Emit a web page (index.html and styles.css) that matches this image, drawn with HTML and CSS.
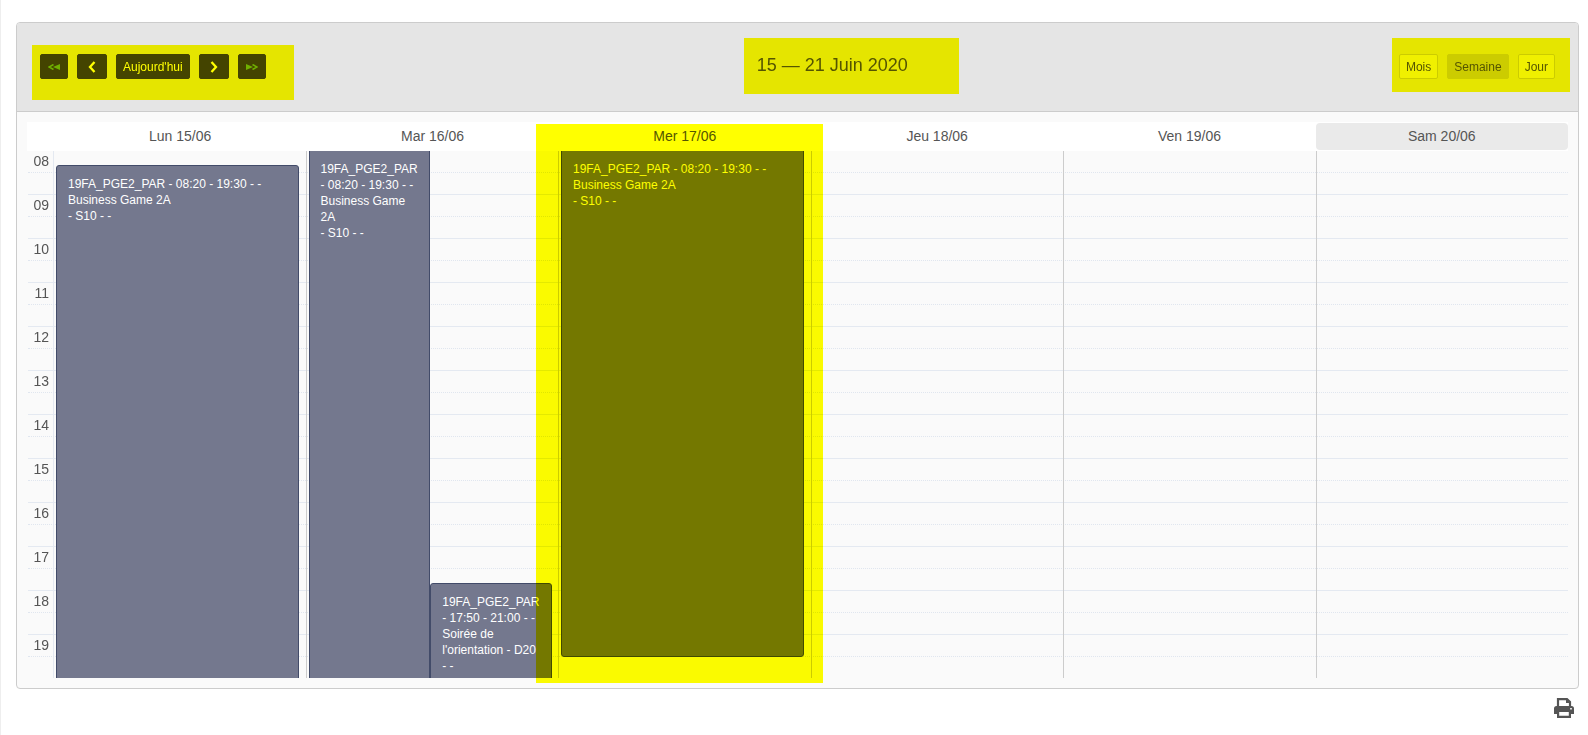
FILE: index.html
```html
<!DOCTYPE html>
<html lang="fr">
<head>
  <meta charset="UTF-8" />
  <meta name="viewport" content="width=device-width, initial-scale=1.0"/>
  <title>Planning</title>
  <link rel="stylesheet" href="styles.css">
</head>
<body>

<main class="planning">
  <header class="toolbar">
    <div class="group nav marked">
      <button type="button" class="btn dark far" aria-label="Année précédente"><svg width="12" height="6" viewBox="0 0 12 6"><path d="M5.500 0.500L1 3l4.500 2.500" fill="none" stroke="currentColor" stroke-width="1.600"/><path d="M12 0v6L5 3z" fill="currentColor"/></svg></button>
      <button type="button" class="btn dark step" aria-label="Semaine précédente"><svg width="8" height="12" viewBox="0 0 8 12"><path d="M6.500 1L2 6l4.500 5" fill="none" stroke="currentColor" stroke-width="2.300"/></svg></button>
      <button type="button" class="btn dark">Aujourd'hui</button>
      <button type="button" class="btn dark step" aria-label="Semaine suivante"><svg width="8" height="12" viewBox="0 0 8 12"><path d="M1.500 1L6 6l-4.500 5" fill="none" stroke="currentColor" stroke-width="2.300"/></svg></button>
      <button type="button" class="btn dark far" aria-label="Année suivante"><svg width="12" height="6" viewBox="0 0 12 6"><path d="M6.500 0.500L11 3 6.500 5.500" fill="none" stroke="currentColor" stroke-width="1.600"/><path d="M0 0v6L7 3z" fill="currentColor"/></svg></button>
    </div>
    <h2 class="title marked">15 — 21 Juin 2020</h2>
    <div class="group views marked">
      <button type="button" class="btn">Mois</button>
      <button type="button" class="btn active">Semaine</button>
      <button type="button" class="btn">Jour</button>
    </div>
  </header>

  <div class="week">
    <div class="days">
      <div class="day">Lun 15/06</div>
      <div class="day">Mar 16/06</div>
      <div class="day">Mer 17/06</div>
      <div class="day">Jeu 18/06</div>
      <div class="day">Ven 19/06</div>
      <div class="day today">Sam 20/06</div>
    </div>

    <div class="scroller">
      <div class="hours">
        <div class="hour">08</div>
        <div class="hour">09</div>
        <div class="hour">10</div>
        <div class="hour">11</div>
        <div class="hour">12</div>
        <div class="hour">13</div>
        <div class="hour">14</div>
        <div class="hour">15</div>
        <div class="hour">16</div>
        <div class="hour">17</div>
        <div class="hour">18</div>
        <div class="hour">19</div>
      </div>
      <div class="columns">
        <div class="column">
          <div class="event from-0820">19FA_PGE2_PAR - 08:20 - 19:30 - -<br>Business Game 2A<br>- S10 - -</div>
        </div>
        <div class="column">
          <div class="event from-top half">19FA_PGE2_PAR - 08:20 - 19:30 - -<br>Business Game 2A<br>- S10 - -</div>
          <div class="event from-1750 half second">19FA_PGE2_PAR - 17:50 - 21:00 - -<br>Soirée de l'orientation - D20 - -</div>
        </div>
        <div class="column">
          <div class="event from-top to-1930">19FA_PGE2_PAR - 08:20 - 19:30 - -<br>Business Game 2A<br>- S10 - -</div>
        </div>
        <div class="column"></div>
        <div class="column"></div>
        <div class="column"></div>
      </div>
    </div>
    <div class="day-mark"></div>
  </div>
</main>

<div class="actions">
  <button type="button" class="print" aria-label="Imprimer">
    <svg width="20" height="20" viewBox="0 0 20 20">
      <path d="M4 9V1.200h9L16 4v5" fill="none" stroke="currentColor" stroke-width="2.200"/>
      <path d="M12 1v4h4.500z" fill="currentColor"/>
      <path fill-rule="evenodd" d="M2.500 8h15A2.500 2.500 0 0 1 20 10.500V16h-3v4H3v-4H0v-5.500A2.500 2.500 0 0 1 2.500 8zM5.200 14v3.700h9.600V14zM16.200 10v1.500h1.600V10z" fill="currentColor"/>
    </svg>
  </button>
</div>

</body>
</html>
```

FILE: styles.css
```css
* {
  box-sizing: border-box;
}
body {
  font-family: Arial, "Liberation Sans", sans-serif;
  font-size: 14px;
  margin: 0;
  min-height: 100vh;
  padding: 22px 9px 0 15px;
  background: #fff;
  color: #555;
  border-left: 1px solid #eee;
}
.planning {
  border: 1px solid #ccc;
  border-radius: 4px;
  background: #fafafa;
}

/* toolbar */
.toolbar {
  display: flex;
  justify-content: space-between;
  align-items: flex-start;
  height: 89px;
  padding: 31px 23px 0;
  background: #e5e5e5;
  border-bottom: 1px solid #ccc;
  border-radius: 3px 3px 0 0;
}
.group {
  display: flex;
  gap: 9px;
}
.btn {
  display: flex;
  align-items: center;
  justify-content: center;
  height: 25px;
  padding: 0 6px;
  font-family: inherit;
  font-size: 12px;
  color: #555;
  background: #f0f0f0;
  border: 1px solid #ccc;
  border-radius: 2px;
  cursor: pointer;
}
.btn.active {
  background: #ccc;
}
.btn.dark {
  color: #fff;
  background: #444;
  border-color: #444;
}
.btn.far {
  width: 28px;
  color: #70b000;
}
.btn.step {
  width: 30px;
}
.title {
  margin: 0;
  font-size: 18px;
  font-weight: normal;
  line-height: 22px;
}

/* highlighter strokes */
.marked {
  position: relative;
}
.marked::after,
.day-mark {
  content: "";
  position: absolute;
  background: #ff0;
  mix-blend-mode: multiply;
  pointer-events: none;
}
.nav::after {
  inset: -9px -28px -21px -8px;
}
.title::after {
  inset: -16px -51px -18px -13px;
}
.views::after {
  inset: -16px -15px -13px -7px;
}
.day-mark {
  top: 12px;
  bottom: 5px;
  left: calc(37px + (100% - 47px) / 3 - 23px);
  width: calc((100% - 47px) / 6 + 35px);
}

/* week grid */
.week {
  position: relative;
  padding: 10px;
}
.days {
  display: flex;
  height: 29px;
  padding: 1px 0 1px 27px;
  background: #fff;
}
.day {
  flex: 1;
  line-height: 27px;
  text-align: center;
}
.day.today {
  background: #eaeaea;
  border-radius: 4px;
}
.scroller {
  display: flex;
  height: 527px;
  overflow: hidden;
  margin-left: 1px;
  background: repeating-linear-gradient(transparent 0 43px, #e4e9f1 43px 44px);
}
.hours {
  width: 26px;
  border-right: 1px solid #e4e9f1;
}
.hour {
  height: 44px;
  padding-right: 4px;
  line-height: 21px;
  text-align: right;
}
.hour::after {
  content: "";
  position: absolute;
  left: 11px;
  right: 10px;
  margin-top: 21px;
  border-top: 1px dotted #e0e6ef;
}
.columns {
  display: flex;
  flex: 1;
}
.column {
  position: relative;
  flex: 1;
}
.column + .column {
  border-left: 1px solid #ccc;
}

/* events */
.event {
  position: absolute;
  left: 2px;
  right: 7px;
  bottom: -44px;
  padding: 10px 11px;
  font-size: 12px;
  line-height: 16px;
  color: #fff;
  background: #74788e;
  border: 1px solid #424b69;
  border-radius: 3px;
}
.event.from-0820 {
  top: 14px;
}
.event.from-top {
  top: -1px;
  border-top-left-radius: 0;
  border-top-right-radius: 0;
}
.event.from-1750 {
  top: 432px;
}
.event.to-1930 {
  bottom: 21px;
}
.event.half {
  right: 50%;
  margin-right: 2px;
}
.event.second {
  left: 50%;
  right: 6px;
  margin: 0 0 0 -2px;
}

.actions {
  display: flex;
  justify-content: flex-end;
  padding: 9px 5px 0 0;
}
.print {
  display: flex;
  padding: 0;
  color: #555;
  background: none;
  border: none;
  cursor: pointer;
}
```
